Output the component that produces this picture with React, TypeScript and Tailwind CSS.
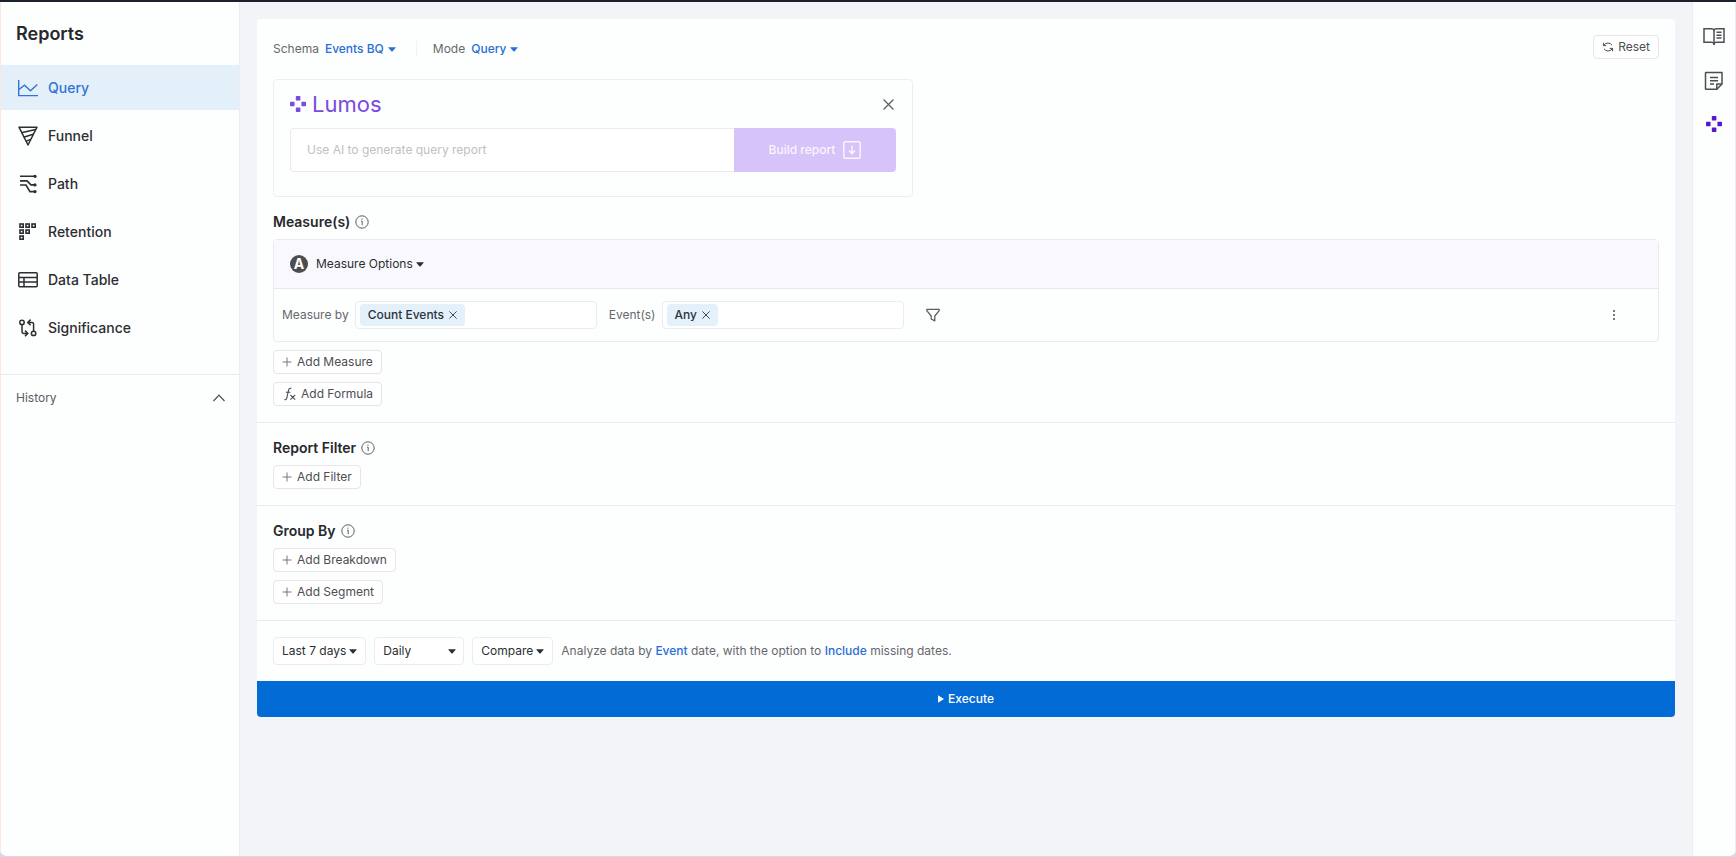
import { useState } from "react";
import type { ReactNode } from "react";

interface INavItem {
  name: string;
  icon: ReactNode;
}

const navItems: INavItem[] = [
  {
    name: "Query",
    icon: (
      <svg width="20" height="20" viewBox="0 0 20 20" fill="none" stroke="currentColor" strokeWidth="1.4">
        <path d="M0.7 2v15.6H20" />
        <path d="M1 11.5l5.5-4.3 6 5.6L19.3 6.6" />
      </svg>
    ),
  },
  {
    name: "Funnel",
    icon: (
      <svg width="20" height="20" viewBox="0 0 20 20" fill="none" stroke="currentColor" strokeWidth="1.5" strokeLinejoin="round">
        <path d="M1 1.2h18L10 19 1 1.2z" />
        <path d="M3.4 6.8L17.6 3.4M5.6 11.2l9.6-3M7.8 15.4l4.8-2" />
      </svg>
    ),
  },
  {
    name: "Path",
    icon: (
      <svg width="20" height="20" viewBox="0 0 20 20" fill="none" stroke="currentColor" strokeWidth="1.6">
        <path d="M2 2.3h15M2 6.9h7l4 4h4M2 11h6l4 6.600h5" />
        <circle cx="17" cy="2.3" r="1.6" fill="currentColor" stroke="none" />
        <circle cx="17" cy="10.9" r="1.6" fill="currentColor" stroke="none" />
        <circle cx="17" cy="17.6" r="1.6" fill="currentColor" stroke="none" />
      </svg>
    ),
  },
  {
    name: "Retention",
    icon: (
      <svg width="20" height="20" viewBox="0 0 20 20" fill="none" stroke="currentColor" strokeWidth="1.6">
        <rect x="2" y="2" width="3.2" height="3.2" />
        <rect x="8" y="2" width="3.2" height="3.2" />
        <rect x="14" y="2" width="3.2" height="3.2" />
        <rect x="2" y="8" width="3.2" height="3.2" />
        <rect x="8" y="8" width="3.2" height="3.2" />
        <rect x="2" y="14" width="3.2" height="3.2" />
      </svg>
    ),
  },
  {
    name: "Data Table",
    icon: (
      <svg width="20" height="20" viewBox="0 0 20 20" fill="none" stroke="currentColor" strokeWidth="1.5">
        <rect x="0.8" y="2.8" width="18.4" height="14" rx="1" />
        <path d="M1 7.4h18M1 12.1h18M6 7.4v9.4" />
      </svg>
    ),
  },
  {
    name: "Significance",
    icon: (
      <svg width="20" height="20" viewBox="0 0 20 20" fill="none" stroke="currentColor" strokeWidth="1.5">
        <circle cx="4" cy="4.4" r="2.2" />
        <circle cx="15.6" cy="15.4" r="2.2" />
        <path d="M4 6.6v7.2q0 1.6 1.6 1.6h3.6M7 12.6l2.8 2.8L7 18.2" />
        <path d="M15.6 13.2V6q0-1.6-1.6-1.6h-3.6M12.6 1.6L9.8 4.4l2.8 2.8" />
      </svg>
    ),
  },
];

const Caret = ({ className = "" }: { className?: string }) => (
  <svg className={className} width="8" height="5" viewBox="0 0 8 5" fill="currentColor" aria-hidden="true">
    <path d="M0.6 0.2h6.8q.6 0 .2.5L4.4 4.4q-.4.4-.8 0L.4.7Q0 .2.6.2z" />
  </svg>
);

const LumosMark = () => (
  <svg width="16" height="16" viewBox="0 0 16 16" fill="currentColor" aria-hidden="true">
    <rect x="5.8" y="0" width="4.6" height="4.6" rx="0.7" />
    <rect x="0" y="5.7" width="4.6" height="4.6" rx="0.7" />
    <rect x="11.4" y="5.7" width="4.6" height="4.6" rx="0.7" />
    <rect x="5.8" y="11.4" width="4.6" height="4.6" rx="0.7" />
  </svg>
);

const Cross = ({ size }: { size: number }) => (
  <svg width={size} height={size} viewBox="0 0 10 10" fill="none" stroke="currentColor" strokeWidth="1.1" aria-hidden="true">
    <path d="M0.5 0.5l9 9M9.5 0.5l-9 9" />
  </svg>
);

const SectionTitle = ({ children }: { children: ReactNode }) => (
  <div className="mb-2 flex h-[18px] items-center gap-[5px]">
    <h2 className="text-sm font-semibold text-[#26282b]">{children}</h2>
    <svg width="14" height="14" viewBox="0 0 14 14" fill="none" stroke="#5b5d61" aria-hidden="true">
      <circle cx="7" cy="7" r="6.2" />
      <path d="M6 6.200h1.200v4M7 3.600v1.200" />
    </svg>
  </div>
);

const AddButton = ({ label, formula = false }: { label: string; formula?: boolean }) => (
  <button className="flex h-6 items-center gap-[5px] rounded border border-[#e6e6e9] bg-white px-2 text-xs text-[#4c4e52]">
    {formula ? (
      <svg className="ml-0.5" width="12" height="14" viewBox="0 0 12 14" fill="none" stroke="currentColor" strokeWidth="1.1" aria-hidden="true">
        <path d="M0.4 12.6q1.8.6 2.4-1.6L4.6 3Q5.2.8 7.4 1.4M1.8 5.2h4.6M6.4 7.8l4.8 4.8M11.2 7.8l-4.8 4.8" />
      </svg>
    ) : (
      <svg width="10" height="10" viewBox="0 0 10 10" fill="none" stroke="#77797d" aria-hidden="true">
        <path d="M5 0.5v9M0.5 5h9" />
      </svg>
    )}
    {label}
  </button>
);

const InlineSelect = ({ id, label, value }: { id: string; label: string; value: string }) => (
  <div className="flex items-center text-xs">
    <label htmlFor={id} className="mr-1.5 text-[#66686c]">
      {label}
    </label>
    <select id={id} className="appearance-none bg-transparent font-medium text-[#2a6fd6] [field-sizing:content]">
      <option>{value}</option>
    </select>
    <Caret className="ml-1 text-[#2a6fd6]" />
  </div>
);

const TagField = ({ id, tag }: { id: string; tag: string }) => {
  const [selected, setSelected] = useState(true);
  return (
    <div className="flex h-7 w-[242px] items-center rounded border border-[#ebebf2] bg-white px-1">
      {selected && (
        <span className="flex h-[22px] shrink-0 items-center gap-[5px] rounded bg-[#e4f1fb] px-2 text-xs font-medium text-[#2b3440]">
          {tag}
          <button aria-label={`Remove ${tag}`} onClick={() => setSelected(false)}>
            <Cross size={8} />
          </button>
        </span>
      )}
      <input id={id} className="w-full min-w-0 bg-transparent px-1 text-xs outline-none" />
    </div>
  );
};

const Sidebar = () => {
  const [active, setActive] = useState("Query");

  return (
    <aside className="w-60 shrink-0 border-r border-l border-r-[#ededf1] border-l-[#fbe6e0] bg-[#fdfefe]">
      <h1 className="flex h-[63px] items-center px-[15px] text-lg font-semibold text-[#26282b]">Reports</h1>
      <nav className="flex flex-col gap-[3px] pb-6">
        {navItems.map((item) => (
          <a
            key={item.name}
            href="#"
            onClick={() => setActive(item.name)}
            className={
              item.name === active
                ? "flex h-[45px] items-center gap-2.5 bg-[#e3f0fa] px-[17px] text-sm font-medium text-[#3274d4]"
                : "flex h-[45px] items-center gap-2.5 px-[17px] text-sm font-medium text-[#2c2e31]"
            }
          >
            {item.icon}
            {item.name}
          </a>
        ))}
      </nav>
      <button className="flex h-[46px] w-full items-center justify-between border-t border-[#eee8ec] pr-3.5 pl-[15px] text-xs text-[#5b5d61]">
        History
        <svg width="12" height="8" viewBox="0 0 12 8" fill="none" stroke="#4c4e52" strokeWidth="1.2" aria-hidden="true">
          <path d="M0.5 7L6 1.2 11.5 7" />
        </svg>
      </button>
    </aside>
  );
};

const LumosPanel = () => (
  <div className="mt-5 max-w-[640px] rounded border border-[#f0ecf0] px-4 pt-4 pb-6">
    <div className="mb-4 flex h-4 items-center justify-between">
      <div className="flex items-center gap-1.5 text-[#7a4be0]">
        <LumosMark />
        <span className="text-[22px] leading-4">Lumos</span>
      </div>
      <button aria-label="Close" className="mr-0.5 text-[#5b5d61]">
        <Cross size={11} />
      </button>
    </div>
    <div className="flex h-11">
      <input
        aria-label="Use AI to generate query report"
        placeholder="Use AI to generate query report"
        className="min-w-0 flex-1 rounded-l border border-r-0 border-[#ede9ec] bg-white px-4 text-xs outline-none placeholder:text-[#bfc0c4]"
      />
      <button className="flex w-[162px] items-center justify-center gap-2 rounded-r bg-[#d5c3f9] text-xs font-medium text-[#fbf5fd]">
        Build report
        <svg width="18" height="18" viewBox="0 0 18 18" fill="none" stroke="currentColor" strokeWidth="1.5" aria-hidden="true">
          <rect x="0.8" y="0.8" width="16.4" height="16.4" rx="1.5" />
          <path d="M9 4.8v7.6M6 9.6l3 3 3-3" />
        </svg>
      </button>
    </div>
  </div>
);

const MeasureBox = () => (
  <div className="mb-2 rounded border border-[#ebe9f1]">
    <div className="flex h-[49px] items-center border-b border-[#e8e6f1] bg-[#f9f8fd] px-4">
      <span className="mr-2 flex size-[18px] items-center justify-center rounded-full bg-[#4c4c50] text-sm font-bold text-white">A</span>
      <button className="flex items-center gap-[3px] text-xs text-[#2c2e31]">
        Measure Options
        <Caret />
      </button>
    </div>
    <div className="flex h-[52px] items-center pl-2 text-xs text-[#66686c]">
      <label htmlFor="measure-by" className="mr-1.5">
        Measure by
      </label>
      <TagField id="measure-by" tag="Count Events" />
      <label htmlFor="events" className="mr-1.5 ml-3">
        Event(s)
      </label>
      <TagField id="events" tag="Any" />
      <button aria-label="Filter measure" className="ml-[22px] text-[#5b5d61]">
        <svg width="14" height="14" viewBox="0 0 14 14" fill="none" stroke="currentColor" strokeWidth="1.3" strokeLinejoin="round">
          <path d="M0.8 1.4h12.4v1.2L8.8 8v4.8L5.2 11V8L0.800 2.600z" />
        </svg>
      </button>
      <button aria-label="More options" className="mr-10 ml-auto text-[#77797d]">
        <svg width="8" height="12" viewBox="0 0 8 12" fill="currentColor">
          <rect x="3" y="1" width="2" height="2" />
          <rect x="3" y="5" width="2" height="2" />
          <rect x="3" y="9" width="2" height="2" />
        </svg>
      </button>
    </div>
  </div>
);

const DateControls = () => (
  <div className="flex items-center gap-2 border-t border-[#ececf0] p-4 text-xs text-[#2c2e31]">
    <button className="flex h-7 items-center gap-[3px] rounded border border-[#ececf0] bg-white px-2">
      Last 7 days
      <Caret />
    </button>
    <div className="relative">
      <select aria-label="Interval" className="h-7 w-[90px] appearance-none rounded border border-[#ececf0] bg-white px-2">
        <option>Daily</option>
        <option>Weekly</option>
        <option>Monthly</option>
      </select>
      <Caret className="pointer-events-none absolute top-3 right-2" />
    </div>
    <button className="flex h-7 items-center gap-[3px] rounded border border-[#ececf0] bg-white px-2">
      Compare
      <Caret />
    </button>
    <p className="text-[#66686c]">
      Analyze data by{" "}
      <a href="#" className="font-medium text-[#2a6fd6]">
        Event
      </a>{" "}
      date, with the option to{" "}
      <a href="#" className="font-medium text-[#2a6fd6]">
        Include
      </a>{" "}
      missing dates.
    </p>
  </div>
);

const App = () => {
  return (
    <div className="bg-[#dcd8e6]">
      <div className="flex min-h-screen overflow-hidden rounded-b-lg border-t-2 border-b border-t-[#1b222c] border-b-[#d9d9de] bg-[#f2f4f7] font-['Inter',sans-serif]">
        <Sidebar />

        <main className="min-w-0 flex-1 px-[17px] pt-[17px] pb-4">
          <div className="rounded bg-[#fdfefe]">
            <section className="p-4">
              <div className="flex h-6 items-center">
                <div className="flex items-center pt-1">
                  <InlineSelect id="schema" label="Schema" value="Events BQ" />
                  <span className="mr-4 ml-5 h-4 border-l border-[#f1f1f4]" />
                  <InlineSelect id="mode" label="Mode" value="Query" />
                </div>
                <button className="ml-auto flex h-6 items-center gap-1 rounded border border-[#e6e6e9] bg-white px-2 text-xs text-[#4c4e52]">
                  <svg width="12" height="12" viewBox="0 0 12 12" fill="none" stroke="currentColor" aria-hidden="true">
                    <path d="M1.5 4.5Q3 2 6 2q2.600 0 4 2.200M1.400 1.800v2.800h2.800M10.500 7.500Q9 10 6 10 3.400 10 2 7.800M10.600 10.200V7.400H7.800" />
                  </svg>
                  Reset
                </button>
              </div>

              <LumosPanel />

              <div className="mt-4">
                <SectionTitle>Measure(s)</SectionTitle>
                <MeasureBox />
                <div className="flex flex-col items-start gap-2">
                  <AddButton label="Add Measure" />
                  <AddButton label="Add Formula" formula />
                </div>
              </div>
            </section>

            <section className="border-t border-[#ececf0] p-4">
              <SectionTitle>Report Filter</SectionTitle>
              <AddButton label="Add Filter" />
            </section>

            <section className="border-t border-[#ececf0] p-4">
              <SectionTitle>Group By</SectionTitle>
              <div className="flex flex-col items-start gap-2">
                <AddButton label="Add Breakdown" />
                <AddButton label="Add Segment" />
              </div>
            </section>

            <DateControls />

            <button className="flex h-9 w-full items-center justify-center gap-1 rounded-b bg-[#026bd6] text-xs font-medium text-white">
              <svg width="6" height="8" viewBox="0 0 6 8" fill="currentColor" aria-hidden="true">
                <path d="M0 0.3L6 4 0 7.7z" />
              </svg>
              Execute
            </button>
          </div>
        </main>

        {/* Right rail */}
        <aside className="flex w-11 shrink-0 flex-col items-center gap-[25px] border-x border-[#ededf1] bg-[#fdfefe] pt-6 text-[#4c4e52]">
          <button aria-label="Documentation">
            <svg width="22" height="20" viewBox="0 0 22 20" fill="none" stroke="currentColor" strokeWidth="1.5">
              <path d="M1 2.8h7.500q2 0 2.500 1.200.5-1.200 2.500-1.200H21v13.400h-7.500q-2 0-2.500 1.400-.5-1.400-2.500-1.400H1z" />
              <path d="M11 4v15M13.500 6.300h5M13.500 9.200h5M13.500 12.100h5" />
            </svg>
          </button>
          <button aria-label="Notes">
            <svg width="20" height="20" viewBox="0 0 20 20" fill="none" stroke="currentColor" strokeWidth="1.5" strokeLinejoin="round">
              <path d="M2 1.500h16v11.500L12.800 18.300H2q-.5 0-.5-.5V2q0-.5.5-.5z" />
              <path d="M18 13h-5.200v5.300M6 6.600h8M6 9.800h8M6 13h4" />
            </svg>
          </button>
          <button aria-label="Lumos" className="text-[#5a17cf]">
            <LumosMark />
          </button>
        </aside>
      </div>
    </div>
  );
};

export default App;
